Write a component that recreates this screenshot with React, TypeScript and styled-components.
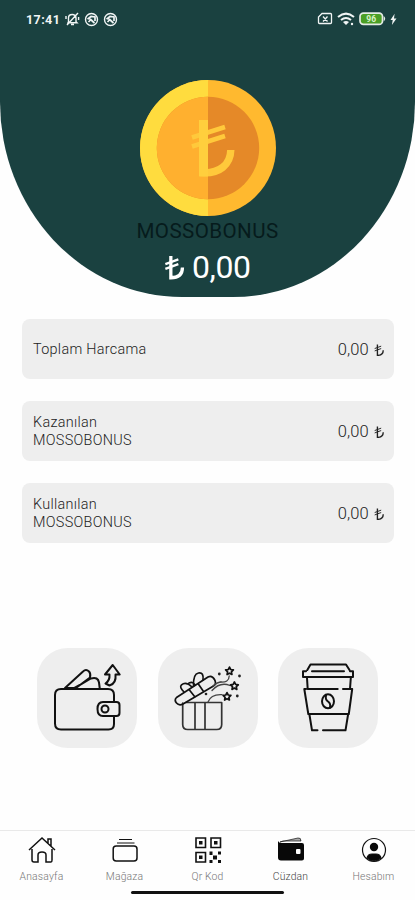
import React from "react";
import styled, { createGlobalStyle } from "styled-components";

const GlobalStyle = createGlobalStyle`
  * { box-sizing: border-box; }
  body { margin: 0; background: #fff; }
`;

const Screen = styled.div`
  width: 415px;
  height: 900px;
  display: flex;
  flex-direction: column;
  background: #fefefe;
  font-family: Roboto, "Liberation Sans", sans-serif;
  overflow: hidden;
`;

const Hero = styled.header`
  height: 297px;
  flex: none;
  background: #1a4140;
  border-radius: 0 0 182px 182px / 0 0 195px 195px;
  display: flex;
  flex-direction: column;
  align-items: center;
`;

const StatusBar = styled.div`
  width: 100%;
  height: 38px;
  padding: 0 18px 0 26px;
  display: flex;
  align-items: center;
  justify-content: space-between;
  color: #f1f5f5;
`;

const StatusGroup = styled.div<{ $gap: number }>`
  display: flex;
  align-items: center;
  gap: ${(p) => p.$gap}px;
`;

const Clock = styled.span`
  font-size: 12.5px;
  font-weight: 700;
  letter-spacing: 0.4px;
  width: 35px;
  white-space: nowrap;
`;

const Coin = styled.svg`
  display: block;
  width: 138px;
  height: 138px;
  margin-top: 41px;
`;

const BonusName = styled.div`
  margin-top: 1px;
  height: 26px;
  line-height: 26px;
  font-size: 20.6px;
  letter-spacing: 0.4px;
  color: #061b1c;
`;

const Balance = styled.div`
  margin-top: 4px;
  height: 38px;
  line-height: 38px;
  font-size: 32px;
  letter-spacing: -0.4px;
  color: #fff;
  display: flex;
  gap: 7px;
  align-items: center;
`;

const Totals = styled.section`
  margin: 21.5px 21px 0 22px;
  display: grid;
  gap: 21.5px;
`;

const TotalCard = styled.div`
  height: 60.6px;
  padding: 2px 10px 0 11px;
  background: #eee;
  border-radius: 8px;
  display: flex;
  align-items: center;
  justify-content: space-between;
`;

const TotalLabel = styled.div`
  font-size: 14.4px;
  font-weight: 300;
  line-height: 17.5px;
  letter-spacing: 0.3px;
  color: #222;
  white-space: pre-line;
`;

const TotalAmount = styled.div`
  font-size: 16.5px;
  font-weight: 300;
  letter-spacing: 0.1px;
  color: #222;
  display: flex;
  align-items: center;
  gap: 5px;
`;

const Actions = styled.section`
  margin: 105px 37px 0;
  display: flex;
  justify-content: space-between;
`;

const ActionButton = styled.button`
  width: 100px;
  height: 100px;
  padding: 0;
  border: 0;
  border-radius: 31px;
  background: #eee;
`;

const LineArt = styled.svg`
  display: block;
  width: 100px;
  height: 100px;
  fill: none;
  stroke: #111;
  stroke-width: 2;
  stroke-linecap: round;
  stroke-linejoin: round;
`;

const BottomBar = styled.nav`
  margin-top: auto;
  height: 70px;
  border-top: 1.5px solid #e9e9e9;
  display: flex;
  flex-direction: column;
  align-items: center;
`;

const Tabs = styled.div`
  width: 100%;
  height: 58px;
  display: grid;
  grid-template-columns: repeat(5, 1fr);
`;

const Tab = styled.div<{ $active?: boolean }>`
  display: flex;
  flex-direction: column;
  align-items: center;
  font-size: 10.4px;
  font-weight: 300;
  line-height: 14px;
  letter-spacing: 0.15px;
  color: ${(p) => (p.$active ? "#444" : "#777")};
`;

const TabIcon = styled.svg`
  display: block;
  width: 30px;
  height: 30px;
  margin: 4px 0 4.5px;
  fill: none;
  stroke: #111;
  stroke-width: 1.2;
`;

const HomeIndicator = styled.div`
  width: 153px;
  height: 3.6px;
  border-radius: 2px;
  background: #111;
  margin-top: 1.5px;
`;

const Lira = styled.svg<{ $size: number }>`
  display: block;
  width: ${(p) => p.$size * 0.82}px;
  height: ${(p) => p.$size}px;
  fill: none;
  stroke: currentColor;
`;

const LiraSign = ({ size, weight }: { size: number; weight: number }) => (
  <Lira $size={size} viewBox="0 0 30 36">
    <path d="M10 1V33C22 33 27 28 27 18" strokeWidth={weight} />
    <path d="M2 13 21 6M2 20 21 13" strokeWidth={weight * 0.7} />
  </Lira>
);

const MutedBell = () => (
  <svg width="15" height="14" viewBox="0 0 15 14" fill="none" stroke="currentColor" strokeWidth="1.4">
    <path d="M3.5 9.8V6C3.5 1.5 11 1.3 11 6v3.8l1 1H3zM6 12.5h3M13 1 2 13M1 4v3M13.6 5v3" />
  </svg>
);

const RoundBadge = () => (
  <svg width="15" height="15" viewBox="0 0 15 15" fill="none" stroke="currentColor" strokeWidth="1.4">
    <circle cx="7.5" cy="7.5" r="6" />
    <path d="M3.5 7.2 7 4.5l4 .5v4M5 6l5.5 5M4.5 10l2-2" strokeWidth="1.7" />
  </svg>
);

const SimIcon = () => (
  <svg width="16" height="14" viewBox="0 0 16 14" fill="none" stroke="currentColor" strokeWidth="1.3">
    <path d="M5 1.5h8.5q1 0 1 1v8q0 1-1 1H2.5q-1 0-1-1V5zM6 4.5l4.5 5m0-5L6 9.5" />
  </svg>
);

const WifiIcon = () => (
  <svg width="18" height="15" viewBox="0 0 18 15" fill="none" stroke="currentColor" strokeWidth="2">
    <path d="M1 5Q9-1.8 17 5M4 8Q9 4 14 8" />
    <path d="M6 10Q9 8 12 10L9 13z" fill="currentColor" stroke="none" />
    <circle cx="15" cy="12" r="1.2" fill="currentColor" stroke="none" />
  </svg>
);

const BatteryIcon = () => (
  <svg width="27" height="14" viewBox="0 0 27 14">
    <rect x="1" y="1.2" width="22.5" height="11.2" rx="3.4" fill="#4b9f25" stroke="#e4ebe5" strokeWidth="1.7" />
    <path d="M24.7 4q3 2.7 0 5.4z" fill="#e4ebe5" />
    <text x="12.2" y="10" textAnchor="middle" fontFamily="Roboto" fontWeight="700" fontSize="8.5" fill="#d9f3c9">96</text>
  </svg>
);

const ChargeIcon = () => (
  <svg width="7" height="13" viewBox="0 0 7 13" fill="currentColor">
    <path d="M4.6.7.5 7h2.2l-.8 5L6.5 5.5H4z" />
  </svg>
);

const CoinArt = () => (
  <Coin viewBox="0 0 138 138">
    <circle cx="69" cy="69" r="68" fill="#ffb92f" />
    <path d="M69 1a68 68 0 0 0 0 136z" fill="#ffdc3e" />
    <circle cx="69" cy="69" r="51.2" fill="#e58928" />
    <path d="M69 17.8a51.2 51.2 0 0 0 0 102.4z" fill="#ffb02f" />
    <g fill="none" stroke="#ffc93b">
      <path d="M64.4 41V93.8C80 94.4 91.5 86 91.8 71" strokeWidth="7.4" />
      <path d="M53 58.5 86 48M53 67.5 86 57" strokeWidth="4.6" />
    </g>
    <path d="M60 41H69V97.4H60z" fill="#ffcf3d" />
  </Coin>
);

const WalletArt = () => (
  <LineArt viewBox="0 0 100 100">
    <path d="M77 68.500V76q0 5.500-5.500 5.500H24q-6 0-6-6V47q0-6 6-6h47q6 0 6 6v6.500" />
    <path d="M28 40 46 23.500q3-3 6 0 2 2 1 6L39 40M28 40h9l17-9.500q7-2 8 4l.7 5.500M53 31 38 40" />
    <path d="M79.500 54H66q-5.500 0-5.500 7 0 7 5.500 7h13.500q3 0 3-3v-8q0-3-3-3z" />
    <circle cx="68" cy="61" r="3.500" />
    <path d="M68.500 35.500q4.500-3 4-9h-4.500l7.700-9.500 7 9.500h-4.200q1 9-6 11z" />
  </LineArt>
);

const Star = ({ x, y }: { x: number; y: number }) => (
  <path
    transform={`translate(${x} ${y})`}
    strokeWidth="1.7"
    d="m0-3.700 1.200 2.400 2.700.4-2 1.900.5 2.700L0 2.400l-2.400 1.300.5-2.700-2-1.900 2.700-.4z"
  />
);

const GiftArt = () => (
  <LineArt viewBox="0 0 100 100">
    <g strokeWidth="1.700">
      <path d="M24.700 55v21.500q0 5 5 5h29q5 0 5-5V54.500H28M37 55v26.500M47 55v26.500" stroke="#333" />
      <path d="M18.500 49.500 50 29q4-2 6.500 2.500t-1 6.500L25 56q-4 2-6.500-1t0-5.500ZM31 41.500l6 7.500M40 35.500l5.500 8" />
      <path d="M26 44q-5-5-2.500-7.200Q28 33 34 39M35.500 38q-.5-12 5-13t4.500 7M31 35q4-2 6 2" />
      <path d="M50 54q3-8 14-7.300M54 42.500q8-9 18-5M62 34q9 1 9.200-6M55 38q4-4 9-4" stroke="#444" strokeWidth="1.300" />
    </g>
    <Star x={71.5} y={22.8} />
    <Star x={76.4} y={37.7} />
    <Star x={69} y={48.3} />
    <g fill="#222" stroke="none">
      <circle cx="61.300" cy="26" r="1.400" /><circle cx="81.500" cy="28" r="1.400" />
      <circle cx="48" cy="46" r="1.300" /><circle cx="79.300" cy="48" r="1.400" />
    </g>
  </LineArt>
);

const CupArt = () => (
  <LineArt viewBox="0 0 100 100">
    <path d="M29.300 22 32.500 16.500h35.500l3.500 5.500M34 23.300h32M72 23.300h3V29H25v-5.700h3" />
    <path d="M29 30 29.700 41h30M65 41h7l.8-11M28 41h-1.700l4 25h40.500l3.400-25h-2" />
    <path d="M31.500 67 34 82.300h5.500M45 82.300h22.500L70 67" />
    <ellipse cx="50" cy="53.300" rx="6" ry="7" />
    <path d="M48 47.500q-1 4 2 6t2 6" />
  </LineArt>
);

const HomeTabIcon = () => (
  <TabIcon viewBox="0 0 30 30">
    <path d="M2 15 15 3 28 15M5 14v11q0 2 2 2h4V20q0-3 4-3t4 3v7h5q1 0 1-2V14M21 8V4h3v7" strokeWidth="1.5" />
  </TabIcon>
);

const StoreTabIcon = () => (
  <TabIcon viewBox="0 0 30 30">
    <path d="M9 4.500h13M7 8h17.500" />
    <rect x="3.200" y="11" width="23.800" height="15" rx="3" strokeWidth="1.500" />
  </TabIcon>
);

const QrTabIcon = () => (
  <TabIcon viewBox="0 0 30 30">
    <path d="M3 3h9.500v9.500H3zM18 3h9.500v9.500H18zM3 17.500h9.500V27H3z" strokeWidth="1.600" />
    <path d="M6 6h3.500v3.500H6zM21 6h3.500v3.500H21zM6 20.500h3.500V24H6zM16.500 16.500h3v3.500h-3zM20 20.500h4v4h-4zM25 16.500h3v3h-3zM16.500 25h3v3h-3zM25 25h3v3h-3z" fill="#111" stroke="none" />
  </TabIcon>
);

const WalletTabIcon = () => (
  <TabIcon viewBox="0 0 30 30">
    <path d="M4 7 22 3q3-.5 3 3H7z" fill="#aaa" strokeWidth=".7" />
    <path d="M2 6q1 2 3 2h21q2 0 2 2v13.500q0 2-2 2H5q-3 0-3-3z" fill="#080808" stroke="none" />
    <rect x="20" y="14" width="4.500" height="5" rx="1" fill="#fff" stroke="none" />
  </TabIcon>
);

const ProfileTabIcon = () => (
  <TabIcon viewBox="0 0 30 30">
    <circle cx="15" cy="15" r="11.500" />
    <circle cx="15" cy="12" r="4.200" fill="#080808" stroke="none" />
    <path d="M8 23q1-4 5-4h4q4 0 5 4-7 6-14 0z" fill="#080808" />
  </TabIcon>
);

const totals = ["Toplam Harcama", "Kazanılan\nMOSSOBONUS", "Kullanılan\nMOSSOBONUS"];

const tabs = [
  { label: "Anasayfa", Icon: HomeTabIcon },
  { label: "Mağaza", Icon: StoreTabIcon },
  { label: "Qr Kod", Icon: QrTabIcon },
  { label: "Cüzdan", Icon: WalletTabIcon, active: true },
  { label: "Hesabım", Icon: ProfileTabIcon },
];

export default function App() {
  return (
    <>
      <GlobalStyle />
      <Screen>
        <Hero>
          <StatusBar>
            <StatusGroup $gap={4}>
              <Clock>17:41</Clock>
              <MutedBell />
              <RoundBadge />
              <RoundBadge />
            </StatusGroup>
            <StatusGroup $gap={4}>
              <SimIcon />
              <WifiIcon />
              <BatteryIcon />
              <ChargeIcon />
            </StatusGroup>
          </StatusBar>
          <CoinArt />
          <BonusName>MOSSOBONUS</BonusName>
          <Balance>
            <LiraSign size={25} weight={4.8} />
            0,00
          </Balance>
        </Hero>
        <Totals>
          {totals.map((label) => (
            <TotalCard key={label}>
              <TotalLabel>{label}</TotalLabel>
              <TotalAmount>
                0,00
                <LiraSign size={12.5} weight={4} />
              </TotalAmount>
            </TotalCard>
          ))}
        </Totals>
        <Actions>
          <ActionButton aria-label="Cüzdan"><WalletArt /></ActionButton>
          <ActionButton aria-label="Hediye"><GiftArt /></ActionButton>
          <ActionButton aria-label="Kahve"><CupArt /></ActionButton>
        </Actions>
        <BottomBar>
          <Tabs>
            {tabs.map(({ label, Icon, active }) => (
              <Tab key={label} $active={active}>
                <Icon />
                {label}
              </Tab>
            ))}
          </Tabs>
          <HomeIndicator />
        </BottomBar>
      </Screen>
    </>
  );
}
